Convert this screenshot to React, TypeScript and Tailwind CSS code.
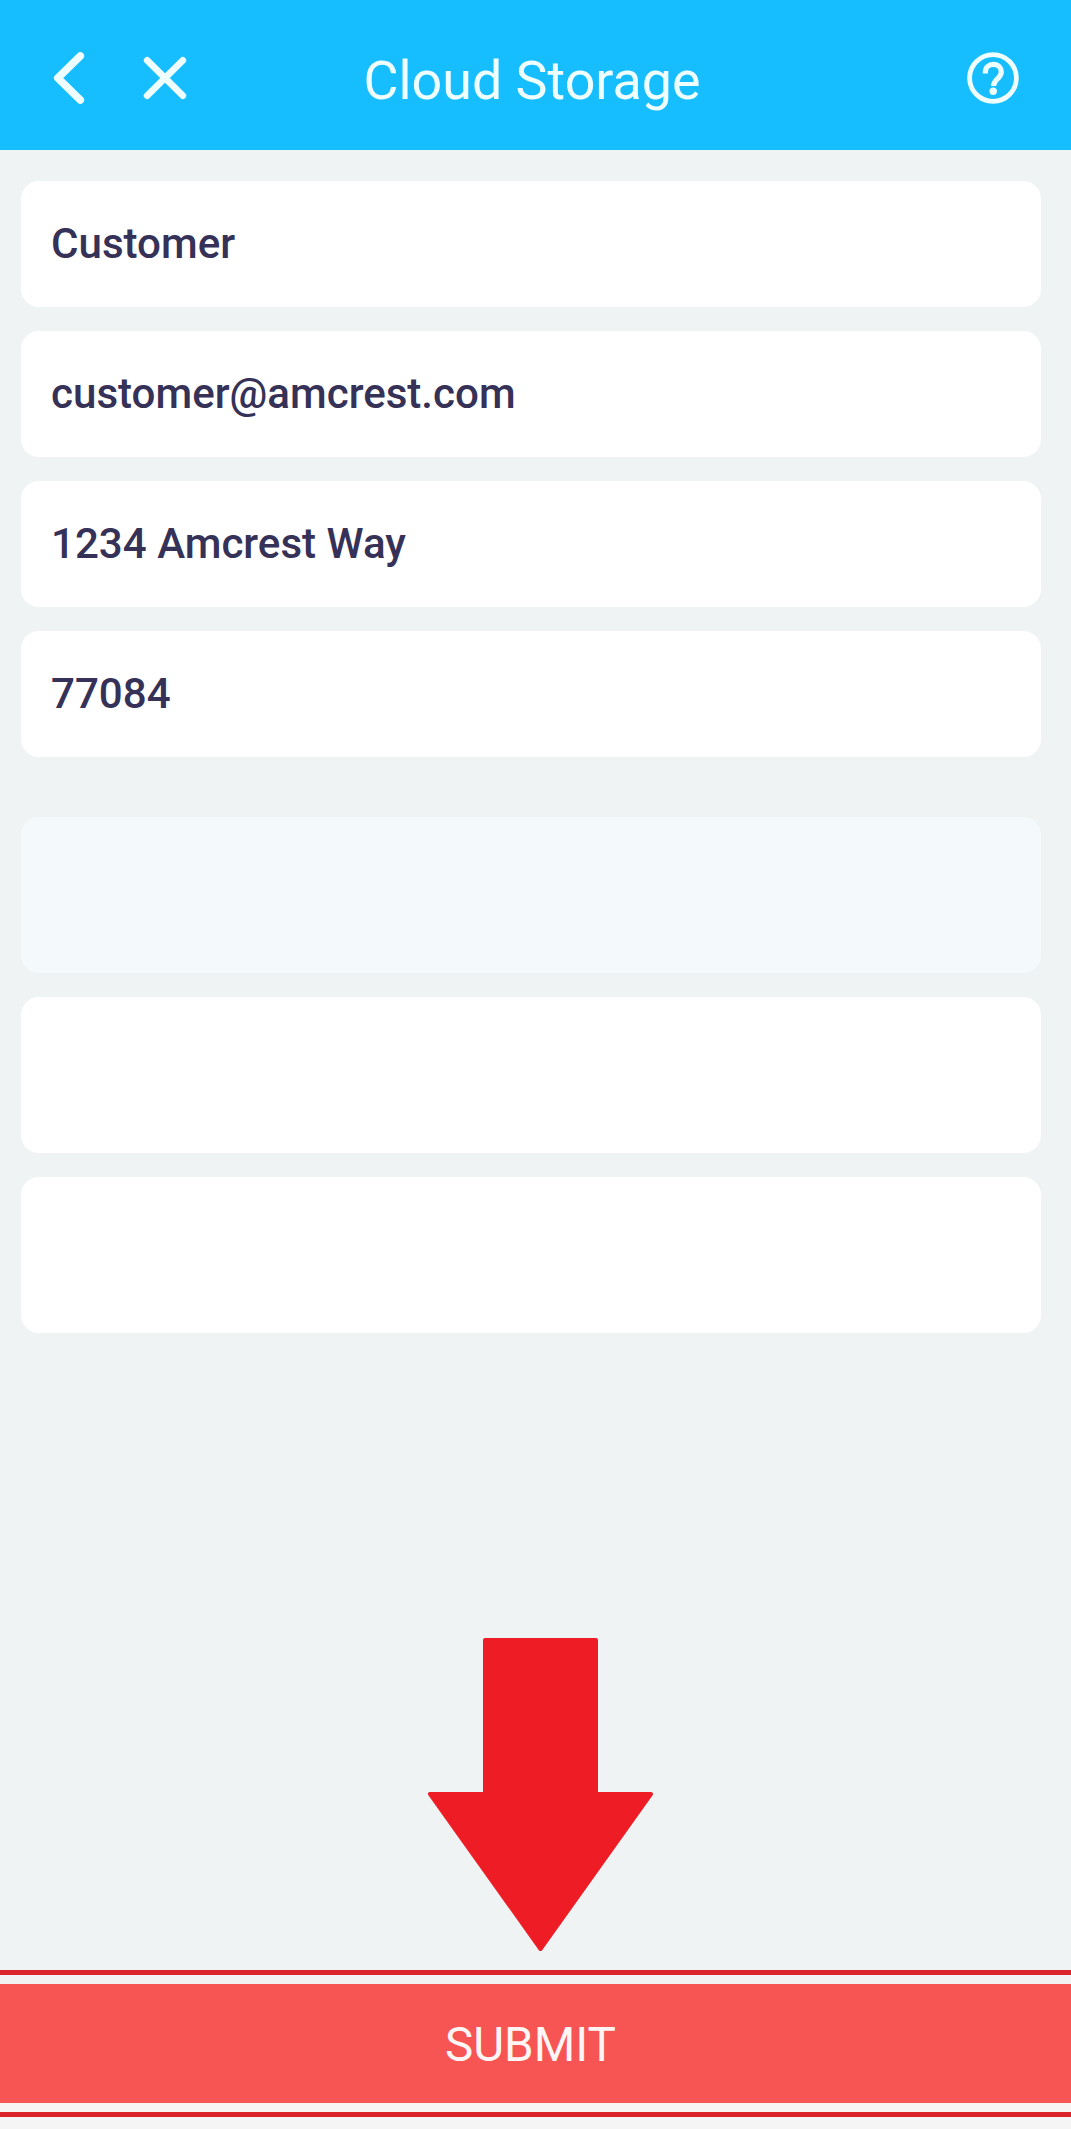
const details = ["Customer", "customer@amcrest.com", "1234 Amcrest Way", "77084"];

const cards = ["bg-[#f4f9fc]", "bg-white", "bg-white"];

function Header() {
  return (
    <header className="flex h-[150px] items-center bg-[#17beff] px-[50px] text-[#effeff]">
      <div className="flex w-[246px] shrink-0 items-center">
        <button aria-label="Back">
          <svg className="block h-[62px] w-[38px]" viewBox="0 0 38 62" fill="none">
            <path
              d="M30.3 12L7.8 34L30.3 56"
              stroke="currentColor"
              strokeWidth="7.6"
              strokeLinecap="round"
              strokeLinejoin="round"
            />
          </svg>
        </button>
        <button aria-label="Close" className="ml-[52px]">
          <svg className="block h-[62px] w-[50px]" viewBox="0 0 50 62" fill="none">
            <path
              d="M7.2 16.3L42.8 51.7M42.8 16.3L7.2 51.7"
              stroke="currentColor"
              strokeWidth="6.8"
              strokeLinecap="round"
            />
          </svg>
        </button>
      </div>
      <h1 className="flex-1 pt-[11px] pr-[3px] text-center text-[53.8px] leading-[64px]">
        Cloud Storage
      </h1>
      <div className="flex w-[250px] shrink-0 justify-end">
        <button aria-label="Help">
          <svg className="block h-[62px] w-14" viewBox="0 0 56 62" fill="none">
            <circle cx="28" cy="34" r="23.4" stroke="currentColor" strokeWidth="4.8" />
            <path
              d="M20.3 29.4V28.4C20.3 23.6 23.8 20.4 28.4 20.4C33.2 20.4 36.3 23.7 36.3 28C36.3 30.8 34.8 32.6 32.4 34.8C29.6 37.4 28.5 38.6 28.5 42"
              stroke="currentColor"
              strokeWidth="5.2"
            />
            <circle cx="28.2" cy="47.2" r="3.7" fill="currentColor" />
          </svg>
        </button>
      </div>
    </header>
  );
}

export default function App() {
  return (
    <div
      className="flex h-[2129px] w-[1071px] flex-col overflow-hidden bg-[#eff3f4]"
      style={{ fontFamily: "Roboto, sans-serif" }}
    >
      <Header />

      <main className="flex flex-1 flex-col pt-[31px] pl-[21px] pr-[30px]">
        <div className="flex flex-col gap-6">
          {details.map((text) => (
            <div
              key={text}
              className="flex h-[126px] items-center rounded-[18px] bg-white px-[30px] text-[42.1px] font-medium leading-[50px] text-[#353157]"
            >
              {text}
            </div>
          ))}
        </div>

        <div className="mt-[60px] flex flex-col gap-6">
          {cards.map((color, i) => (
            <div key={i} className={`h-[156px] rounded-[18px] ${color}`} />
          ))}
        </div>

        <svg
          className="mt-[305px] ml-[407px] h-[313px] w-[225px] shrink-0"
          viewBox="0 0 225 313"
          fill="#ee1c25"
        >
          <path
            d="M57 2H168V156H223L112.5 311L2 156H57Z"
            stroke="#ee1c25"
            strokeWidth="4"
            strokeLinejoin="round"
          />
        </svg>
      </main>

      <footer className="shrink-0">
        <div className="h-[5px] bg-[#dc242d]" />
        <div className="h-[9px] bg-[#f2f2f2]" />
        <button className="block h-[119px] w-full bg-[#f75454] pr-[10px] pt-[2px] text-center text-[47.6px] leading-[56px] text-[#fff5f5]">
          SUBMIT
        </button>
        <div className="h-[9px] bg-[#f8f4f4]" />
        <div className="h-[5px] bg-[#dc242d]" />
        <div className="h-3 bg-[#f5f5f5]" />
      </footer>
    </div>
  );
}
